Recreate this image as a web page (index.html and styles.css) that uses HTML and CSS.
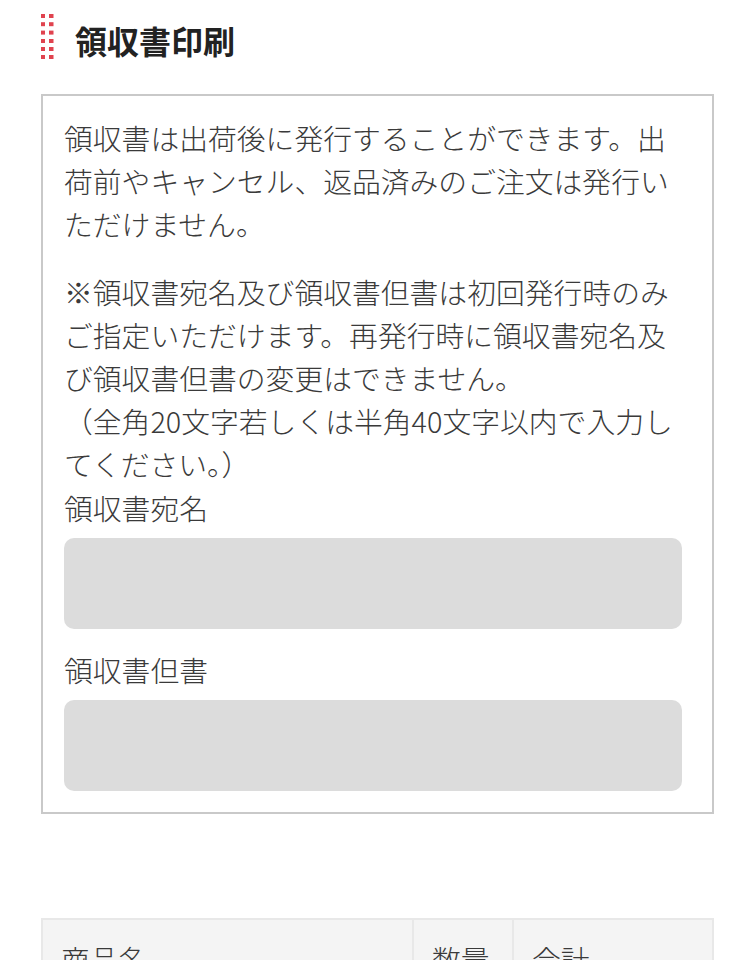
FILE: index.html
```html
<!DOCTYPE html>
<html lang="ja">
  <head>
    <meta charset="UTF-8" />
    <meta name="viewport" content="width=device-width, initial-scale=1.0" />
    <title>領収書印刷</title>
    <link rel="stylesheet" href="styles.css">
  </head>
  <body>
    <main class="receipt-page">
      <h2 class="section-title">
        <svg class="title-mark" width="13" height="45" viewBox="0 0 13 45" aria-hidden="true">
          <g fill="#e0434f">
            <rect x="0" y="0" width="4" height="4" />
            <rect x="8" y="0" width="4.5" height="4" />
            <rect x="0" y="8.2" width="4" height="4" />
            <rect x="8" y="8.2" width="4.5" height="4" />
            <rect x="0" y="16.6" width="4" height="4" />
            <rect x="8" y="16.6" width="4.5" height="4" />
            <rect x="0" y="25" width="4" height="4" />
            <rect x="8" y="25" width="4.5" height="4" />
            <rect x="0" y="33" width="4" height="4" />
            <rect x="8" y="33" width="4.5" height="4" />
            <rect x="0" y="41" width="4" height="4" />
            <rect x="8" y="41" width="4.5" height="4" />
          </g>
        </svg>
        <span class="title-text">領収書印刷</span>
      </h2>

      <section class="receipt-box">
        <p class="receipt-note">
          領収書は出荷後に発行することができます。出荷前やキャンセル、返品済みのご注文は発行いただけません。
        </p>
        <p class="receipt-note is-tight">
          ※領収書宛名及び領収書但書は初回発行時のみご指定いただけます。再発行時に領収書宛名及び領収書但書の変更はできません。<br />（全角20文字若しくは半角40文字以内で入力してください。）
        </p>

        <div class="receipt-field">
          <label class="field-label" for="receipt-name">領収書宛名</label>
          <input class="field-input" id="receipt-name" type="text" />
        </div>
        <div class="receipt-field is-spaced">
          <label class="field-label" for="receipt-proviso">領収書但書</label>
          <input class="field-input" id="receipt-proviso" type="text" />
        </div>
      </section>

      <table class="order-table">
        <thead>
          <tr>
            <th class="col-name">商品名</th>
            <th class="col-qty">数量</th>
            <th class="col-total">合計</th>
          </tr>
        </thead>
        <tbody>
          <tr>
            <td class="col-name">商品</td>
            <td class="col-qty">1</td>
            <td class="col-total">¥0</td>
          </tr>
        </tbody>
      </table>
    </main>
  </body>
</html>
```

FILE: styles.css
```css
:root {
  --text-color: #3a3a3a;
  --title-color: #222222;
  --box-border: #c9c9c9;
  --input-bg: #dcdcdc;
  --table-border: #e8e8e8;
  --table-head-bg: #f4f4f4;
}

*,
*::before,
*::after {
  box-sizing: border-box;
  margin: 0;
  padding: 0;
}

body {
  font-family: "Noto Sans CJK JP", "Noto Sans", sans-serif;
  color: var(--text-color);
  background-color: #ffffff;
  font-size: 28.8px;
  font-weight: 300;
  line-height: 1.5;
}

.receipt-page {
  padding: 14px 36px 40px 41px;
}

.section-title {
  display: flex;
  align-items: flex-start;
  gap: 21px;
  margin-bottom: 28px;
}

.title-mark {
  flex: none;
  display: block;
}

.title-text {
  font-size: 32px;
  font-weight: 700;
  line-height: 52px;
  color: var(--title-color);
}

.receipt-box {
  border: 2px solid var(--box-border);
  padding: 20px 30px 21px 21px;
}

.receipt-note {
  margin-bottom: 24px;
}

.receipt-note.is-tight {
  margin-bottom: 0;
}

.receipt-field {
  display: flex;
  flex-direction: column;
}

.receipt-field.is-spaced {
  margin-top: 19px;
}

.field-label {
  display: block;
}

.field-input {
  display: block;
  width: 100%;
  height: 91px;
  margin-top: 9px;
  border: none;
  border-radius: 10px;
  background-color: var(--input-bg);
  font: inherit;
  padding: 0 20px;
}

.order-table {
  width: 100%;
  margin-top: 104px;
  border-collapse: collapse;
  border: 2px solid var(--table-border);
}

.order-table th,
.order-table td {
  border: 2px solid var(--table-border);
  text-align: left;
  font-weight: 300;
  padding: 17px 18px;
  vertical-align: middle;
}

.order-table th {
  background-color: var(--table-head-bg);
}

.col-name {
  width: 371px;
  padding-left: 20px;
}

.col-qty {
  width: 100px;
}
```
